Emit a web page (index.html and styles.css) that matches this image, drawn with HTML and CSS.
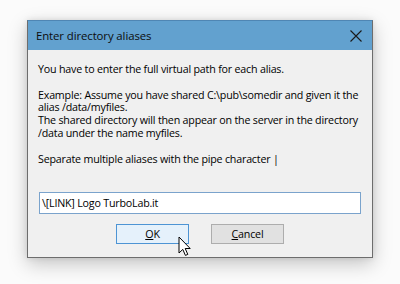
FILE: index.html
```html
<!DOCTYPE html>
<html>
<head>
<meta charset="utf-8">
<link rel="stylesheet" href="styles.css">
</head>
<body>
<div class="dialog">
  <div class="titlebar">
    <span class="title">Enter directory aliases</span>
    <svg class="close" width="12" height="12" viewBox="0 0 12 12"><path d="M0.5 0.5 L11.5 11.5 M11.5 0.5 L0.5 11.5" stroke="#1a1a1a" stroke-width="1.1" fill="none"/></svg>
  </div>
  <div class="content">
    <p class="msg">You have to enter the full virtual path for each alias.</p>
    <p class="msg">Example: Assume you have shared C:\pub\somedir and given it the<br>alias /data/myfiles.<br>The shared directory will then appear on the server in the directory<br>/data under the name myfiles.</p>
    <p class="msg">Separate multiple aliases with the pipe character |</p>
    <div class="input">\[LINK] Logo TurboLab.it</div>
    <div class="buttons">
      <div class="btn btn-default"><span class="u">O</span>K</div>
      <div class="btn"><span class="u">C</span>ancel</div>
    </div>
    <svg class="cursor" width="14" height="21" viewBox="0 0 14 21"><path d="M1 1 L1 17 L4.8 13.4 L7.4 19.4 L9.8 18.4 L7.2 12.5 L12.2 12.5 Z" fill="#fff" stroke="#000" stroke-width="1" stroke-linejoin="miter"/></svg>
  </div>
</div>
</body>
</html>
```
FILE: styles.css
```css
html, body {
  margin: 0;
  padding: 0;
  background: #fbfbfb;
}
body {
  width: 400px;
  height: 284px;
  overflow: hidden;
  font-family: "Open Sans", "Noto Sans", sans-serif;
  font-size: 10.7px;
  letter-spacing: -0.2px;
  color: #000;
}
.dialog {
  margin: 20px 0 0 27px;
  width: 344px;
  height: 236px;
  border: 1px solid #6d6d6d;
  border-top-color: #4f86b4;
  background: #f0f0f0;
  box-shadow: 0 6px 18px rgba(0,0,0,0.22), 0 0 6px rgba(0,0,0,0.10);
  display: flex;
  flex-direction: column;
}
.titlebar {
  height: 29px;
  background: #62a1cf;
  display: flex;
  align-items: center;
  justify-content: space-between;
  padding: 0 10px 0 8px;
}
.title {
  font-size: 11.4px;
  letter-spacing: -0.1px;
  color: #0d0d0d;
  padding-bottom: 1px;
}
.close {
  display: block;
}
.content {
  position: relative;
  flex: 1;
  padding: 13px 10px 0 10px;
}
.msg {
  margin: 0 0 13px 0;
  line-height: 12.7px;
  white-space: nowrap;
}
.input {
  margin-top: 27px;
  height: 20px;
  border: 1px solid #7aa3cc;
  background: #fff;
  line-height: 20px;
  padding: 0 0 0 2px;
  margin-left: 1px;
  width: 318px;
}
.buttons {
  display: flex;
  justify-content: center;
  gap: 22px;
  margin-top: 10px;
}
.btn {
  width: 71px;
  height: 18px;
  line-height: 18px;
  text-align: center;
  border: 1px solid #adadad;
  background: #e1e1e1;
}
.btn-default {
  border-color: #4d94d4;
  background: #e5f1fb;
}
.u {
  text-decoration: underline;
}
.cursor {
  position: absolute;
  left: 150px;
  top: 186px;
}
```
